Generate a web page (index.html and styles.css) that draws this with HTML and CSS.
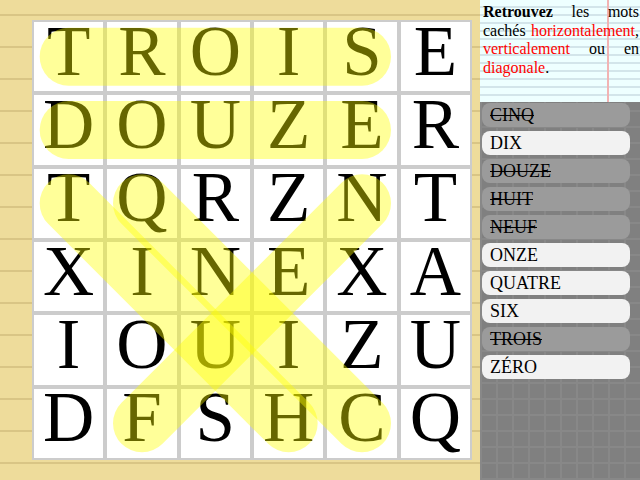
FILE: index.html
```html
<!DOCTYPE html>
<html lang="fr">
<head>
<meta charset="utf-8">
<title>Mots cachés</title>
<link rel="stylesheet" href="styles.css">
</head>
<body>
<div class="app">
  <main class="board">
    <div class="grid-wrap">
      <div class="grid">
        <div class="cell">T</div><div class="cell">R</div><div class="cell">O</div><div class="cell">I</div><div class="cell">S</div><div class="cell">E</div>
        <div class="cell">D</div><div class="cell">O</div><div class="cell">U</div><div class="cell">Z</div><div class="cell">E</div><div class="cell">R</div>
        <div class="cell">T</div><div class="cell">Q</div><div class="cell">R</div><div class="cell">Z</div><div class="cell">N</div><div class="cell">T</div>
        <div class="cell">X</div><div class="cell">I</div><div class="cell">N</div><div class="cell">E</div><div class="cell">X</div><div class="cell">A</div>
        <div class="cell">I</div><div class="cell">O</div><div class="cell">U</div><div class="cell">I</div><div class="cell">Z</div><div class="cell">U</div>
        <div class="cell">D</div><div class="cell">F</div><div class="cell">S</div><div class="cell">H</div><div class="cell">C</div><div class="cell">Q</div>
      </div>
      <svg class="marks" width="440" height="440" viewBox="0 0 440 440">
        <line x1="36.67" y1="36.67" x2="330" y2="36.67"/>
        <line x1="36.67" y1="110" x2="330" y2="110"/>
        <line x1="36.67" y1="183.33" x2="256.67" y2="403.33"/>
        <line x1="110" y1="183.33" x2="330" y2="403.33"/>
        <line x1="330" y1="183.33" x2="110" y2="403.33"/>
      </svg>
    </div>
  </main>
  <aside class="side">
    <div class="intro">
      <p><b>Retrouvez</b> les mots cachés <span class="red">horizontalement</span>, <span class="red">verticalement</span> ou en <span class="red">diagonale</span>.</p>
    </div>
    <ul class="words">
      <li class="word found">CINQ</li>
      <li class="word">DIX</li>
      <li class="word found">DOUZE</li>
      <li class="word found">HUIT</li>
      <li class="word found">NEUF</li>
      <li class="word">ONZE</li>
      <li class="word">QUATRE</li>
      <li class="word">SIX</li>
      <li class="word found">TROIS</li>
      <li class="word">ZÉRO</li>
    </ul>
  </aside>
</div>
</body>
</html>
```

FILE: styles.css
```css
html, body {
  margin: 0;
  padding: 0;
}
body {
  width: 640px;
  height: 480px;
  overflow: hidden;
  font-family: "Liberation Serif", "DejaVu Serif", serif;
}
.app {
  display: flex;
  width: 640px;
  height: 480px;
}
.board {
  width: 480px;
  height: 480px;
  box-sizing: border-box;
  padding: 20px 0 0 32px;
  background-color: #eedc9b;
  background-image: repeating-linear-gradient(to bottom,
    transparent 0, transparent 14px,
    #d9c585 14px, #d9c585 16px,
    transparent 16px, transparent 32px);
}
.grid-wrap {
  position: relative;
  width: 440px;
  height: 440px;
}
.grid {
  width: 440px;
  height: 440px;
  box-sizing: border-box;
  padding: 2px;
  display: grid;
  grid-template-columns: repeat(6, minmax(0, 1fr));
  grid-template-rows: repeat(6, minmax(0, 1fr));
  gap: 4px;
  background: #cccccc;
}
.cell {
  background: #ffffff;
  display: flex;
  align-items: center;
  justify-content: center;
  box-sizing: border-box;
  padding-bottom: 12px;
  font-size: 71px;
  line-height: 50px;
  color: #000;
}
.marks {
  position: absolute;
  left: 0;
  top: 0;
}
.marks line {
  stroke: #ffff00;
  stroke-opacity: 0.4;
  stroke-width: 58;
  stroke-linecap: round;
}
.side {
  width: 160px;
  height: 480px;
  display: flex;
  flex-direction: column;
}
.intro {
  height: 102px;
  box-sizing: border-box;
  padding: 3px 1px 0 3px;
  background-color: #eeffff;
  background-image:
    linear-gradient(to right, transparent 127px, #f2b3b3 127px, #f2b3b3 129px, transparent 129px),
    repeating-linear-gradient(to bottom, transparent 0, transparent 6px, #d3e5ea 6px, #d3e5ea 8px);
}
.intro p {
  margin: 0;
  font-size: 16px;
  line-height: 18.5px;
  text-align: justify;
  color: #000;
}
.red {
  color: #ff0000;
}
.words {
  flex: 1;
  margin: 0;
  padding: 1px 0 0 2px;
  list-style: none;
  display: flex;
  flex-direction: column;
  gap: 4px;
  background-color: #808080;
  background-image:
    repeating-linear-gradient(to right, #888888 0, #888888 2px, transparent 2px, transparent 16px),
    repeating-linear-gradient(to bottom, transparent 0, transparent 8px, #888888 8px, #888888 10px, transparent 10px, transparent 16px);
}
.word {
  width: 148px;
  height: 24px;
  box-sizing: border-box;
  padding-left: 8px;
  border-radius: 8px;
  background: #f2f2f2;
  font-size: 18px;
  line-height: 24px;
  color: #000;
}
.word.found {
  background: #9b9b9b;
  text-decoration: line-through;
}
```
